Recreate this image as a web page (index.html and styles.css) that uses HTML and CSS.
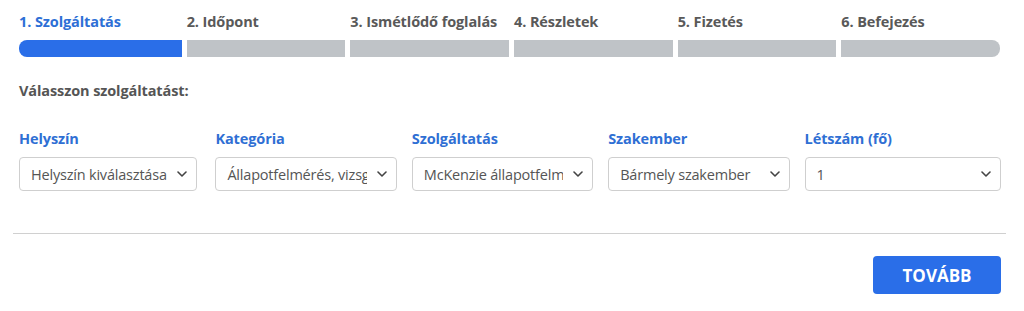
FILE: index.html
```html
<!DOCTYPE html>
<html lang="hu">
<head>
<meta charset="utf-8">
<link rel="stylesheet" href="styles.css">
</head>
<body>
<div class="wizard">
  <div class="steps">
    <div class="step active"><div class="step-label">1. Szolgáltatás</div><div class="step-bar"></div></div>
    <div class="step"><div class="step-label">2. Időpont</div><div class="step-bar"></div></div>
    <div class="step"><div class="step-label">3. Ismétlődő foglalás</div><div class="step-bar"></div></div>
    <div class="step"><div class="step-label">4. Részletek</div><div class="step-bar"></div></div>
    <div class="step"><div class="step-label">5. Fizetés</div><div class="step-bar"></div></div>
    <div class="step"><div class="step-label">6. Befejezés</div><div class="step-bar"></div></div>
  </div>

  <div class="section-title">Válasszon szolgáltatást:</div>

  <div class="fields">
    <div class="field">
      <div class="field-label">Helyszín</div>
      <div class="select select-first"><span class="select-text">Helyszín kiválasztása</span><svg class="chev" viewBox="0 0 10 6" width="10" height="6"><path d="M1 1l4 4 4-4" fill="none" stroke="#444" stroke-width="1.6" stroke-linecap="round" stroke-linejoin="round"/></svg></div>
    </div>
    <div class="field">
      <div class="field-label">Kategória</div>
      <div class="select"><span class="select-text">Állapotfelmérés, vizsgálat</span><svg class="chev" viewBox="0 0 10 6" width="10" height="6"><path d="M1 1l4 4 4-4" fill="none" stroke="#444" stroke-width="1.6" stroke-linecap="round" stroke-linejoin="round"/></svg></div>
    </div>
    <div class="field">
      <div class="field-label">Szolgáltatás</div>
      <div class="select"><span class="select-text">McKenzie állapotfelmérés</span><svg class="chev" viewBox="0 0 10 6" width="10" height="6"><path d="M1 1l4 4 4-4" fill="none" stroke="#444" stroke-width="1.6" stroke-linecap="round" stroke-linejoin="round"/></svg></div>
    </div>
    <div class="field">
      <div class="field-label">Szakember</div>
      <div class="select"><span class="select-text">Bármely szakember</span><svg class="chev" viewBox="0 0 10 6" width="10" height="6"><path d="M1 1l4 4 4-4" fill="none" stroke="#444" stroke-width="1.6" stroke-linecap="round" stroke-linejoin="round"/></svg></div>
    </div>
    <div class="field field-last">
      <div class="field-label">Létszám (fő)</div>
      <div class="select"><span class="select-text">1</span><svg class="chev" viewBox="0 0 10 6" width="10" height="6"><path d="M1 1l4 4 4-4" fill="none" stroke="#444" stroke-width="1.6" stroke-linecap="round" stroke-linejoin="round"/></svg></div>
    </div>
  </div>

  <hr class="divider">

  <div class="actions">
    <button class="btn-next" type="button">TOVÁBB</button>
  </div>
</div>
</body>
</html>
```

FILE: styles.css
```css
* { box-sizing: border-box; }
html, body { margin: 0; padding: 0; background: #fff; }
body {
  font-family: "Open Sans", "Noto Sans", "Liberation Sans", sans-serif;
  color: #555;
}
.wizard {
  padding: 10px 18px 0 13px;
}
.steps {
  display: flex;
  gap: 5px;
  padding: 0 6px;
}
.step { flex: 1 1 0; min-width: 0; }
.step:first-child { flex-grow: 1.025; }
.step-label {
  font-size: 14.5px;
  font-weight: 700;
  color: #595959;
  line-height: 24px;
  white-space: nowrap;
  letter-spacing: -0.1px;
}
.step.active .step-label { color: #2d6fd6; }
.step-bar {
  margin-top: 6px;
  height: 17px;
  background: #bfc3c7;
}
.step.active .step-bar { background: #2a6ee8; }
.step:first-child .step-bar { border-radius: 8px 0 0 8px; }
.step:last-child .step-bar { border-radius: 0 8px 8px 0; }

.section-title {
  margin: 24px 0 0 6px;
  font-size: 14.5px;
  font-weight: 700;
  color: #555;
  line-height: 20px;
  letter-spacing: -0.1px;
}
.fields {
  display: grid;
  grid-template-columns: repeat(5, 1fr);
  margin: 28px 0 0 6px;
  padding-right: 5px;
}
.field { min-width: 0; }
.field-label {
  font-size: 14.5px;
  font-weight: 700;
  color: #2f6fd4;
  line-height: 20px;
  letter-spacing: -0.1px;
}
.select {
  margin-top: 8px;
  height: 34px;
  width: calc(100% - 15px);
  border: 1px solid #cfcfcf;
  border-radius: 4px;
  display: flex;
  align-items: center;
  padding: 0 9px 0 11px;
  gap: 10px;
  background: #fff;
}
.select-first { width: calc(100% - 18px); }
.field-last .select { width: 100%; }
.select-text {
  flex: 1 1 auto;
  min-width: 0;
  overflow: hidden;
  white-space: nowrap;
  font-size: 14.5px;
  color: #555;
  letter-spacing: -0.2px;
}
.chev { flex: none; }

.divider {
  margin: 42px 0 0 0;
  border: none;
  border-top: 1px solid #d0d0d0;
}
.actions {
  display: flex;
  justify-content: flex-end;
  padding: 22px 5px 0 0;
}
.btn-next {
  width: 128px;
  height: 38px;
  border: none;
  border-radius: 4px;
  background: #2a6ee8;
  color: #fff;
  font-family: "Open Sans", "Noto Sans", sans-serif;
  font-size: 17px;
  font-weight: 700;
  cursor: pointer;
}
```
